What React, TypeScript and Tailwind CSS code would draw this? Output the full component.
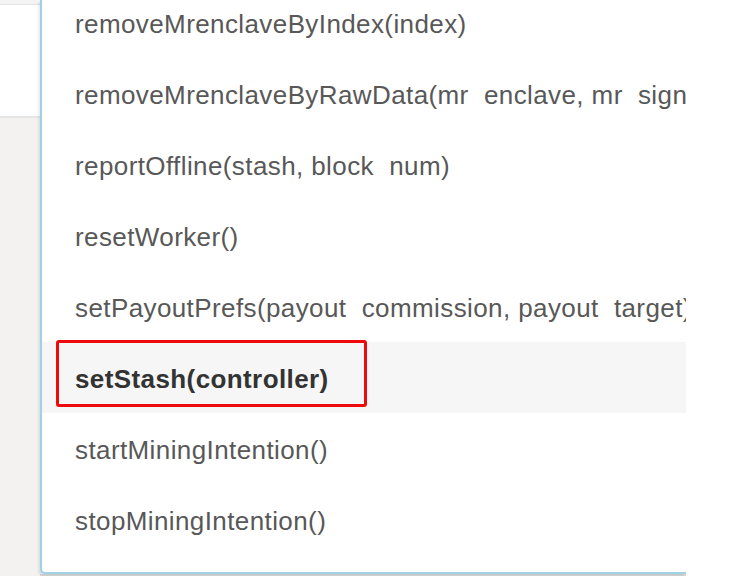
const methods = [
  "removeMrenclaveByIndex(index)",
  "removeMrenclaveByRawData(mr  enclave, mr  signer, isv  prod  id, isv  svn)",
  "reportOffline(stash, block  num)",
  "resetWorker()",
  "setPayoutPrefs(payout  commission, payout  target)",
  "setStash(controller)",
  "startMiningIntention()",
  "stopMiningIntention()",
];

const selected = "setStash(controller)";

export default function App() {
  return (
    <div
      className="flex h-[576px] w-[743px] overflow-hidden bg-white"
      style={{ fontFamily: '"Liberation Sans", Arial, sans-serif' }}
    >
      {/* page behind the dropdown */}
      <div className="flex w-[40px] shrink-0 flex-col bg-[#f3f2f1]">
        <div className="h-[5px] border-b border-[#e4e4e4] bg-[#f4f4f4]" />
        <div className="h-[113px] border-b-2 border-[#e6e6e6] bg-white" />
      </div>

      {/* dropdown */}
      <div className="flex w-[646px] shrink-0 flex-col bg-[#f3f2f1]">
        <div className="relative h-[574px] overflow-hidden rounded-bl-[5px] border-b-2 border-l-2 border-[#9fd2e4] bg-white shadow-[-2px_2px_2px_rgba(0,0,0,0.08)]">
          <ul className="-mt-[13px]">
            {methods.map((m) => (
              <li
                key={m}
                className={`flex h-[71px] items-center whitespace-pre pl-[33px] pt-[4px] text-[26px] tracking-[0.4px] ${
                  m === selected ? "bg-[#f6f6f6] font-bold text-[#333333]" : "text-[#585858]"
                }`}
              >
                {m}
              </li>
            ))}
          </ul>
          <div className="pointer-events-none absolute left-[14px] top-[340px] h-[67px] w-[311px] rounded-[3px] border-[3px] border-[#ee0a0a]" />
        </div>
        <div className="h-[2px] bg-[#d9d9d9]" />
      </div>

      <div className="flex-1 bg-white" />
    </div>
  );
}
